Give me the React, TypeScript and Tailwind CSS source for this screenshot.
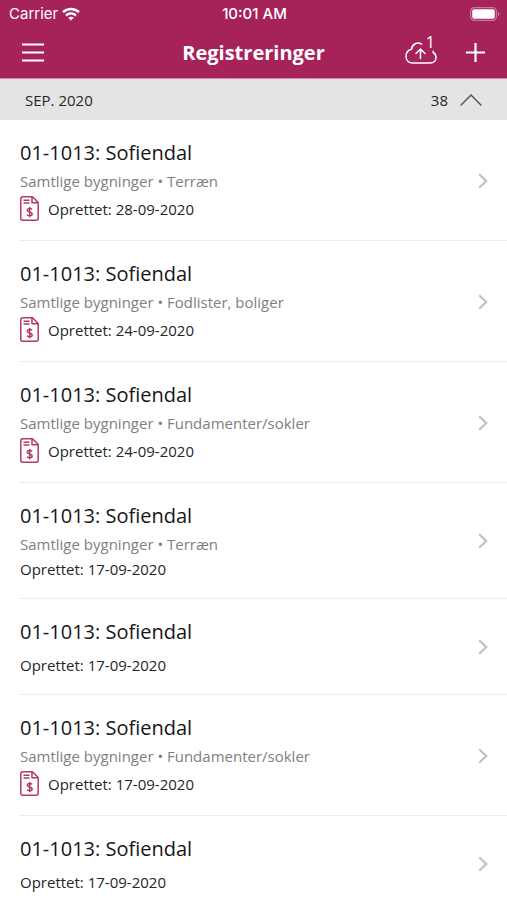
type Entry = { location?: string; date: string; invoiced?: boolean };

const entries: Entry[] = [
  { location: "Samtlige bygninger • Terræn", date: "28-09-2020", invoiced: true },
  { location: "Samtlige bygninger • Fodlister, boliger", date: "24-09-2020", invoiced: true },
  { location: "Samtlige bygninger • Fundamenter/sokler", date: "24-09-2020", invoiced: true },
  { location: "Samtlige bygninger • Terræn", date: "17-09-2020" },
  { date: "17-09-2020" },
  { location: "Samtlige bygninger • Fundamenter/sokler", date: "17-09-2020", invoiced: true },
  { date: "17-09-2020" },
];

function WifiIcon() {
  return (
    <svg width="18" height="14" viewBox="0 0 18 14" fill="none" stroke="currentColor" strokeWidth="2.500" aria-hidden="true">
      <path d="M1 5.200C5.500 .9 12.500 .9 17 5.200" />
      <path d="M4 8.500C6.900 5.800 11.100 5.800 14 8.500" />
      <path d="M9 13.600 6.200 10.800C7.800 9.400 10.200 9.400 11.800 10.800Z" fill="currentColor" stroke="none" />
    </svg>
  );
}

function BatteryIcon() {
  return (
    <svg width="30" height="14" viewBox="0 0 30 14" fill="none" aria-hidden="true">
      <rect x=".6" y=".6" width="25.800" height="12.800" rx="3.800" stroke="#fff" strokeOpacity=".4" strokeWidth="1.200" />
      <rect x="2.200" y="2.200" width="22.600" height="9.600" rx="2" fill="#fff" />
      <path d="M28 4.800c1.700.7 1.700 3.700 0 4.400z" fill="#fff" fillOpacity=".5" />
    </svg>
  );
}

function CloudUploadIcon() {
  return (
    <svg width="32" height="28" viewBox="0 2 32 28" fill="none" stroke="currentColor" strokeWidth="1.500" strokeLinecap="round" strokeLinejoin="round" aria-hidden="true">
      <path d="M16.500 7.200C12.500 4.600 7.200 7 6.500 12.200C3.200 13 1 15.700 1 19.200C1 23.200 3.800 26 7.800 26H25.200C28.600 26 31 23.600 31 20.500C31 18.300 29.900 16.500 28.200 15.500V14.200" />
      <path d="M15.500 21.500V12.500M11 16.500 15.500 12 20 16.500" />
    </svg>
  );
}

function InvoiceIcon() {
  return (
    <svg className="shrink-0 text-[#b23a63]" width="19" height="25" viewBox="0 0 19 25" fill="none" stroke="currentColor" strokeWidth="1.500" strokeLinejoin="round" aria-hidden="true">
      <path d="M3 .8H12.500L18.200 6.500V22.200Q18.200 24.200 16.200 24.200H2.800Q.8 24.200 .8 22.200V3Q.8 .8 3 .8Z" />
      <path d="M12 1V6.800H18" />
      <path d="M3.500 4.200H9.500M3.500 7H9.500" />
      <path d="M12 13.300C11.400 12.300 7.300 11.900 7.300 14.200C7.300 16.500 12.200 15.400 12.200 17.900C12.200 20.200 7.700 20 7 18.700M9.700 11V21.200" />
    </svg>
  );
}

function Row({ entry }: { entry: Entry }) {
  return (
    <li className="pl-5">
      <a href="#registrering" className="flex items-center border-b border-[#ececec] pt-5 pr-[19px] pb-[19px]">
        <div className="min-w-0 flex-1">
          <h2 className="text-[20px] leading-[26px] text-[#161616]">01-1013: Sofiendal</h2>
          {entry.location && <p className="mt-1 text-[15px] leading-[22px] text-[#808080]">{entry.location}</p>}
          {entry.invoiced ? (
            <div className="mt-1 flex items-center gap-[9px]">
              <InvoiceIcon />
              <p className="text-[15px] leading-5">Oprettet: {entry.date}</p>
            </div>
          ) : (
            <p className={entry.location ? "mt-1 text-[15px] leading-5" : "mt-[10px] text-[15px] leading-5"}>
              Oprettet: {entry.date}
            </p>
          )}
        </div>
        <svg width="10" height="16" viewBox="0 0 10 16" fill="none" stroke="#c2c2c2" strokeWidth="2.300" aria-hidden="true">
          <path d="M1.200 1.200 8.200 8 1.200 14.800" />
        </svg>
      </a>
    </li>
  );
}

export default function App() {
  return (
    <div className="h-screen overflow-hidden bg-white font-['Open_Sans',sans-serif] text-[#262626]">
      <header className="border-b border-[#d68aa8] bg-[#a62359] text-white">
        <div className="grid h-[27px] grid-cols-3 items-center pr-[7px] pl-[9px] font-['Inter',sans-serif] text-[15px] leading-5">
          <div className="flex items-center gap-1">
            <span>Carrier</span>
            <WifiIcon />
          </div>
          <span className="text-center font-medium">10:01 AM</span>
          <div className="flex justify-end">
            <BatteryIcon />
          </div>
        </div>
        <div className="grid h-[51px] grid-cols-[1fr_auto_1fr] items-center px-[22px]">
          <button type="button" aria-label="Menu" className="justify-self-start">
            <svg width="22" height="20" viewBox="0 0 22 20" stroke="currentColor" strokeWidth="1.800" aria-hidden="true">
              <path d="M0 1.500H22M0 9.500H22M0 17.500H22" />
            </svg>
          </button>
          <h1 className="text-[20px] leading-7 font-bold">Registreringer</h1>
          <div className="flex items-center gap-[29px] justify-self-end">
            <button type="button" aria-label="Upload 1" className="relative">
              <CloudUploadIcon />
              <span className="absolute -top-[7px] right-[2px] text-[16px] leading-5">1</span>
            </button>
            <button type="button" aria-label="Tilføj">
              <svg width="19" height="20" viewBox="0 0 19 20" stroke="currentColor" strokeWidth="2.200" aria-hidden="true">
                <path d="M0 9.500H19M9.500 0V19" />
              </svg>
            </button>
          </div>
        </div>
      </header>
      <main>
        <button type="button" aria-expanded="true" className="flex h-[41px] w-full items-center bg-[#e4e4e4] px-[25px] text-[15px] leading-5">
          <span>SEP. 2020</span>
          <span className="ml-auto">38</span>
          <svg className="ml-3" width="22" height="14" viewBox="0 0 22 14" fill="none" stroke="#555" strokeWidth="1.400" aria-hidden="true">
            <path d="M.6 12.500 11 2 21.400 12.500" />
          </svg>
        </button>
        <ul>
          {entries.map((entry, i) => (
            <Row key={i} entry={entry} />
          ))}
        </ul>
      </main>
    </div>
  );
}
